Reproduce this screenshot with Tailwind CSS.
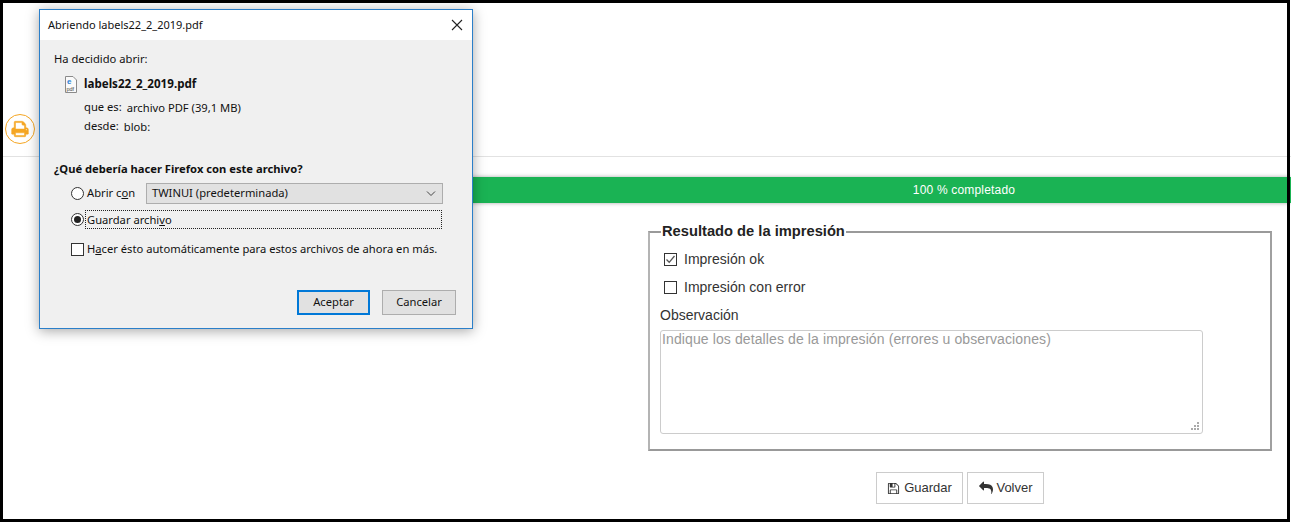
<!DOCTYPE html>
<html lang="es">
<head>
    <meta charset="UTF-8">
    <meta name="viewport" content="width=device-width, initial-scale=1.0">
    <title>Resultado de la impresión</title>
    <script src="https://cdn.jsdelivr.net/npm/@tailwindcss/browser@4"></script>
</head>
<body class="bg-white">
    <div class="relative w-[1291px] h-[523px] overflow-hidden bg-white text-[#333] font-['Liberation_Sans',sans-serif] text-[14px]">
        <!-- Page header -->
        <div class="h-[157px] ml-[3px] border-b border-[#e2e2e2] flex items-end pb-[12px] pl-[2px]">
            <div class="w-[30px] h-[30px] rounded-full border border-[#f5a623] flex items-center justify-center bg-white">
                <svg class="w-[18px] h-[18px] text-[#f5a623]" viewBox="0 0 1792 1792" fill="currentColor" stroke="currentColor" stroke-width="50"><path d="M448 1536h896v-256h-896v256zm0-640h896v-384h-160q-40 0-68-28t-28-68v-160h-640v640zm1152 64q0-26-19-45t-45-19-45 19-19 45 19 45 45 19 45-19 19-45zm128 0v416q0 13-9.500 22.500t-22.500 9.500h-224v160q0 40-28 68t-68 28h-960q-40 0-68-28t-28-68v-160h-224q-13 0-22.500-9.500t-9.500-22.500v-416q0-79 56.500-135.500t135.500-56.500h64v-544q0-40 28-68t68-28h672q40 0 88 20t76 48l152 152q28 28 48 76t20 88v256h64q79 0 135.500 56.500t56.500 135.500z"/></svg>
            </div>
        </div>

        <!-- Progress -->
        <div class="mt-[20px] h-[26px] ml-[200px] pl-[437px] bg-[#1ab354] shadow-[0_0_4px_rgba(0,0,0,0.35)] flex items-center justify-center text-white text-[12px] tracking-[0.18px]">100 % completado</div>

        <!-- Form -->
        <div class="ml-[648px] w-[624px] mt-[20px]">
            <fieldset class="min-w-0 h-[228px] border-2 border-t-[#9a9a9a] border-l-[#b4b4b4] border-r-[#a0a0a0] border-b-[#999] pl-[14px] pr-[69px]">
                <legend class="-ml-[3px] px-px text-[14.7px] leading-[17px] font-bold text-[#222]">Resultado de la impresión</legend>
                <div class="flex items-center gap-[7px] mt-[10px] h-[18px]">
                    <span class="w-[13px] h-[13px] border border-[#333] flex items-center justify-center">
                        <svg class="w-[11px] h-[11px]" viewBox="0 0 11 11" fill="none" stroke="#555" stroke-width="1.3"><path d="M1.5 5.5 4.2 8.3 9.5 2"/></svg>
                    </span>
                    <span>Impresión ok</span>
                </div>
                <div class="flex items-center gap-[7px] mt-[10px] h-[18px]">
                    <span class="w-[13px] h-[13px] border border-[#333]"></span>
                    <span>Impresión con error</span>
                </div>
                <label class="block -ml-[4px] mt-[10px] leading-[18px]">Observación</label>
                <div class="relative -ml-[4px] mt-[6px] w-[543px]">
                    <textarea class="block w-[543px] h-[104px] resize-none border border-[#ccc] rounded-[3px] px-px py-0 leading-[16px] placeholder:text-[#999] placeholder:opacity-100 placeholder:tracking-[0.11px]" placeholder="Indique los detalles de la impresión (errores u observaciones)"></textarea>
                    <svg class="absolute right-[3px] bottom-[3px] w-[9px] h-[9px]" viewBox="0 0 9 9" fill="#aaa"><path d="M6 0h2v2H6zM3 3h2v2H3zM6 3h2v2H6zM0 6h2v2H0zM3 6h2v2H3zM6 6h2v2H6z"/></svg>
                </div>
            </fieldset>
        </div>

        <div class="mt-[21px] ml-[876px] flex gap-[4px] text-[13px]">
            <button class="w-[87px] h-[32px] border border-[#ccc] bg-white flex items-center justify-center gap-[4px]">
                <svg class="w-[13px] h-[13px]" viewBox="0 0 1792 1792" fill="currentColor"><path d="M512 1536h768v-384h-768v384zm896 0h128v-896q0-14-10-38.500t-20-34.500l-281-281q-10-10-34-20t-39-10v416q0 40-28 68t-68 28h-576q-40 0-68-28t-28-68v-416h-128v1280h128v-416q0-40 28-68t68-28h832q40 0 68 28t28 68v416zm-384-928v-320q0-13-9.500-22.500t-22.500-9.500h-192q-13 0-22.500 9.500t-9.500 22.500v320q0 13 9.500 22.500t22.500 9.500h192q13 0 22.500-9.500t9.500-22.500zm640 32v928q0 40-28 68t-68 28h-1344q-40 0-68-28t-28-68v-1344q0-40 28-68t68-28h928q40 0 88 20t76 48l280 280q28 28 48 76t20 88z"/></svg>
                Guardar
            </button>
            <button class="w-[77px] h-[32px] border border-[#ccc] bg-white flex items-center justify-center gap-[3px] pl-px">
                <svg class="w-[14px] h-[14px]" viewBox="0 0 1792 1792" fill="currentColor"><path d="M1792 1120q0 166-127 451-3 7-10.500 24t-13.500 30-13 22q-12 17-28 17-15 0-23.500-10t-8.500-25q0-9 2.500-26.500t2.500-23.500q5-68 5-123 0-101-17.500-181t-48.500-138.500-80-101-105.500-69.500-133-42.500-154-21.500-175.500-6h-224v256q0 26-19 45t-45 19-45-19l-512-512q-19-19-19-45t19-45l512-512q19-19 45-19t45 19 19 45v256h224q713 0 875 403 53 134 53 333z"/></svg>
                Volver
            </button>
        </div>

        <!-- Firefox download dialog -->
        <div class="absolute left-[39px] top-[9px] w-[434px] h-[320px] border border-[#2b7fc9] bg-[#f0f0f0] shadow-[0_2px_12px_rgba(0,0,0,0.35)] font-['Noto_Sans',sans-serif] text-[11.2px] text-[#111] flex flex-col">
            <div class="h-[30px] bg-white flex items-center justify-between pl-[8px] pr-[9px] text-[11px]">
                <span>Abriendo labels22_2_2019.pdf</span>
                <svg class="w-[12px] h-[12px]" viewBox="0 0 12 12" stroke="#222" stroke-width="1.1"><path d="M1 1 11 11M11 1 1 11"/></svg>
            </div>
            <div class="pl-[14px] pt-[10px]">
                <div class="leading-[18px]">Ha decidido abrir:</div>
                <div class="flex items-center gap-[7px] ml-[11px] mt-[7px] h-[18px]">
                    <svg class="w-[12px] h-[17px]" viewBox="0 0 12 17">
                        <path d="M.5.5H8L11.500 4V16.500H.5Z" fill="#fafafa" stroke="#8a8a8a"/>
                        <text x="2" y="8" font-size="8" font-weight="700" fill="#2a7fd4" font-family="Liberation Sans">e</text>
                        <text x="1.500" y="14.500" font-size="5.500" fill="#444" font-family="Liberation Sans">pdf</text>
                    </svg>
                    <span class="font-bold text-[11.6px]">labels22_2_2019.pdf</span>
                </div>
                <div class="flex gap-[5px] ml-[30px] mt-[5px] leading-[18px]"><span>que es:</span><span class="mt-px">archivo PDF (39,1 MB)</span></div>
                <div class="flex gap-[5px] ml-[30px] leading-[18px]"><span>desde:</span><span class="mt-px">blob:</span></div>
                <div class="font-bold mt-[24px] leading-[18px]">¿Qué debería hacer Firefox con este archivo?</div>

                <div class="flex items-center ml-[17px] mt-[5px] h-[21px]">
                    <span class="w-[13px] h-[13px] rounded-full border border-[#333] bg-white"></span>
                    <span class="ml-[3px] w-[59px]">Abrir c<u>o</u>n</span>
                    <div class="w-[297px] h-[21px] border border-[#adadad] bg-[#e1e1e1] flex items-center justify-between pl-[5px] pr-[6px]">
                        <span>TWINUI (predeterminada)</span>
                        <svg class="w-[10px] h-[6px]" viewBox="0 0 10 6" fill="none" stroke="#444"><path d="M1 .5 5 4.500 9 .5"/></svg>
                    </div>
                </div>
                <div class="flex items-center ml-[17px] mt-[5px] h-[20px]">
                    <span class="w-[13px] h-[13px] rounded-full border border-[#333] bg-white flex items-center justify-center"><span class="w-[7px] h-[7px] rounded-full bg-[#222]"></span></span>
                    <span class="ml-[1px] w-[357px] h-[19px] border border-dotted border-[#222] pl-[1px] leading-[17px]">Guardar archi<u>v</u>o</span>
                </div>
                <div class="flex items-center ml-[17px] mt-[12px] h-[16px]">
                    <span class="w-[13px] h-[13px] border border-[#333] bg-white"></span>
                    <span class="ml-[3px]">H<u>a</u>cer ésto automáticamente para estos archivos de ahora en más.</span>
                </div>
            </div>
            <div class="mt-auto mb-[13px] mr-[16px] flex justify-end gap-[12px]">
                <button class="w-[73px] h-[25px] border-2 border-[#0078d7] bg-[#e1e1e1]">Aceptar</button>
                <button class="w-[74px] h-[25px] border border-[#adadad] bg-[#e1e1e1]">Cancelar</button>
            </div>
        </div>

        <!-- Black frame of the screenshot -->
        <div class="absolute left-0 top-0 w-[1290px] h-[522px] border-[3px] border-black pointer-events-none"></div>
    </div>
</body>
</html>
